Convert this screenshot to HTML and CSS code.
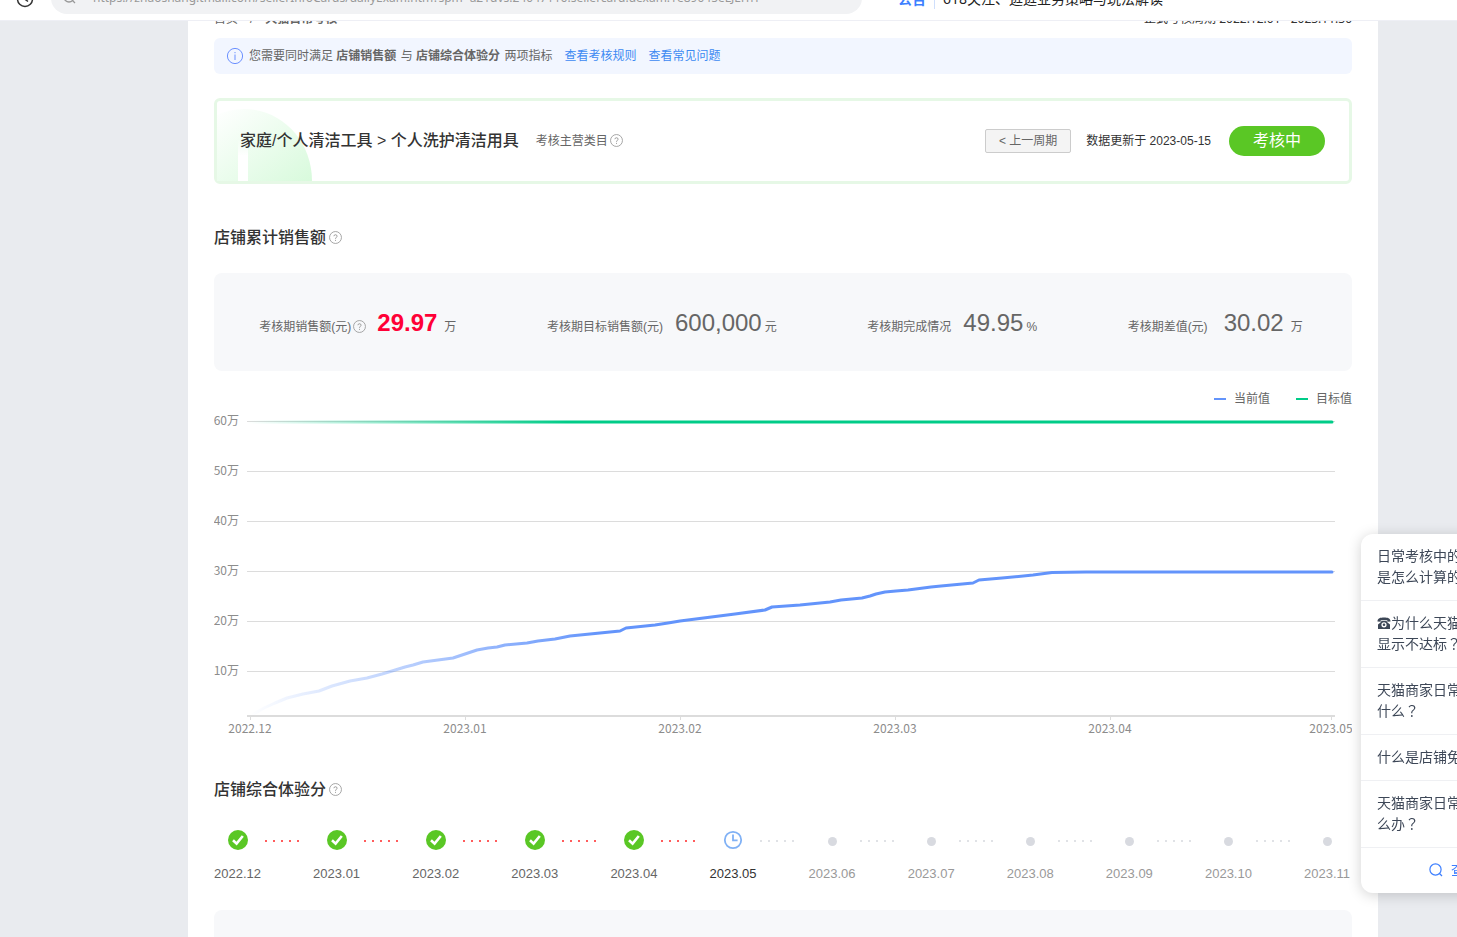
FILE: index.html
```html
<!DOCTYPE html>
<html lang="zh-CN">
<head>
<meta charset="utf-8">
<title>天猫日常考核</title>
<link rel="stylesheet" href="styles.css">
</head>
<body>
<svg class="defs" aria-hidden="true">
  <symbol id="help" viewBox="0 0 12 12">
    <circle cx="6" cy="6" r="5.5" fill="none" stroke="currentColor" stroke-width=".8"/>
    <path d="M4.5 4.8C4.5 3 7.5 3 7.5 4.8C7.5 5.8 6 5.8 6 7.2M6 8.2V9.1" fill="none" stroke="currentColor" stroke-width=".9"/>
  </symbol>
  <symbol id="done" viewBox="0 0 20 20">
    <circle cx="10" cy="10" r="10" fill="#5ac725"/>
    <path d="M5 10.2L8.6 13.6L14.8 6" fill="none" stroke="#fff" stroke-width="2.6"/>
  </symbol>
  <symbol id="clock" viewBox="0 0 20 20">
    <circle cx="10" cy="10" r="8.2" fill="none" stroke="#80b1f5" stroke-width="1.8"/>
    <path d="M10 4.5V10.3H14.6" fill="none" stroke="#80b1f5" stroke-width="1.8"/>
  </symbol>
</svg>

<header class="browser">
  <svg class="history" viewBox="0 0 18 18" aria-hidden="true"><circle cx="9" cy="9" r="7.5"/><path d="M8 4V8.500L12 11.5"/></svg>
  <label class="address">
    <svg viewBox="0 0 14 14" aria-hidden="true"><circle cx="6" cy="6" r="5"/><path d="M9.6 9.6L12 12"/></svg>
    <input type="text" aria-label="地址" value="https://zhaoshang.tmall.com/sellerInfoCards/dailyExam.htm?spm=a21dvs.24047116.sellercard.dexam.1e89045eLJErhY">
  </label>
  <div class="bulletin"><b>公告</b><a href="#">618关注、逛逛业务策略与玩法解读</a></div>
</header>

<main class="page">
  <div class="sheet">
    <div class="crumbs">
      <nav><a href="#">首页</a><span class="slash">/</span><b>天猫日常考核</b></nav>
      <span class="period">正式考核周期 2022.12.01 - 2023.11.30</span>
    </div>

    <div class="notice">
      <svg class="info" viewBox="0 0 18 18" aria-hidden="true"><circle cx="9" cy="9" r="7.6"/><path d="M9 7.5V13M9 5V6.2"/></svg>
      <p>您需要同时满足 <b>店铺销售额</b> 与 <b>店铺综合体验分</b> 两项指标</p>
      <a href="#">查看考核规则</a>
      <a href="#">查看常见问题</a>
    </div>

    <section class="category">
      <svg class="leaf" viewBox="0 0 96 72" aria-hidden="true">
        <defs>
          <linearGradient id="leafFill" x1="0" y1="0" x2="1" y2="1"><stop offset="0" stop-color="#fff"/><stop offset="1" stop-color="#d8fadc"/></linearGradient>
          <linearGradient id="leafBar" x1="0" y1="0" x2="0" y2="1"><stop offset="0" stop-color="#fff" stop-opacity="0"/><stop offset=".4" stop-color="#fff"/></linearGradient>
        </defs>
        <path d="M0 6C8 2 17 0 27 0C65 0 95 32 95 72H0Z" fill="url(#leafFill)"/>
        <path d="M21 30H31V72H21Z" fill="url(#leafBar)"/>
      </svg>
      <h1>家庭/个人清洁工具 &gt; 个人洗护清洁用具</h1>
      <span class="main-category">考核主营类目<svg class="help"><use href="#help"/></svg></span>
      <button class="prev" type="button">&lt; 上一周期</button>
      <span class="updated">数据更新于 2023-05-15</span>
      <span class="status">考核中</span>
    </section>

    <h2>店铺累计销售额<svg class="help"><use href="#help"/></svg></h2>
    <div class="stats">
      <div class="stat"><span>考核期销售额(元)<svg class="help"><use href="#help"/></svg></span><strong class="alert">29.97</strong><span class="unit wide">万</span></div>
      <div class="stat"><span>考核期目标销售额(元)</span><strong>600,000</strong><span class="unit">元</span></div>
      <div class="stat"><span>考核期完成情况</span><strong>49.95</strong><span class="unit">%</span></div>
      <div class="stat"><span>考核期差值(元)</span><strong class="spaced">30.02</strong><span class="unit wide">万</span></div>
    </div>

    <div class="legend"><span class="current">当前值</span><span class="target">目标值</span></div>
    <svg class="chart" viewBox="0 0 1138 330" role="img" aria-label="店铺累计销售额走势">
      <defs>
        <linearGradient id="targetLine" gradientUnits="userSpaceOnUse" x1="33" y1="0" x2="353" y2="0"><stop offset="0" stop-color="#00cc88" stop-opacity="0"/><stop offset="1" stop-color="#00cc88"/></linearGradient>
        <linearGradient id="currentLine" gradientUnits="userSpaceOnUse" x1="36" y1="0" x2="386" y2="0"><stop offset="0" stop-color="#6394fb" stop-opacity="0"/><stop offset="1" stop-color="#6394fb"/></linearGradient>
      </defs>
      <path class="grid" d="M33 11.5H1121M33 61.5H1121M33 111.5H1121M33 161.5H1121M33 211.5H1121M33 261.5H1121"/>
      <path class="axis" d="M33 306H1121"/>
      <path class="grid" d="M36.5 306V310M251.5 306V310M466.5 306V310M681.5 306V310M896.5 306V310M1117.5 306V310"/>
      <path d="M33 12H1118" fill="none" stroke="url(#targetLine)" stroke-width="3" stroke-linecap="round"/>
      <path fill="none" stroke="url(#currentLine)" stroke-width="3" stroke-linejoin="round" stroke-linecap="round" d="M36 306L50 298L61 293L73 288L89 284L105 281L118 276L136 271L153 268L168 264L178 261L191 257L199 255L209 252L239 248L251 244L263 240L274 238L283 237L291 235L313 233L324 231L341 229L356 226L386 223L406 221L412 218L441 215L454 213L466 211L521 204L551 200L558 197L586 195L616 192L627 190L648 188L656 186L662 184L671 182L682 181L694 180L717 177L727 176L759 173L765 170L788 168L819 165L838 162.500L872 162H1118"/>
      <g class="values"><text x="25" y="15">60万</text><text x="25" y="65">50万</text><text x="25" y="115">40万</text><text x="25" y="165">30万</text><text x="25" y="215">20万</text><text x="25" y="265">10万</text></g>
      <g class="months"><text x="36" y="323">2022.12</text><text x="251" y="323">2023.01</text><text x="466" y="323">2023.02</text><text x="681" y="323">2023.03</text><text x="896" y="323">2023.04</text><text x="1117" y="323">2023.05</text></g>
    </svg>

    <h2>店铺综合体验分<svg class="help"><use href="#help"/></svg></h2>
    <ol class="steps">
      <li class="done"><svg><use href="#done"/></svg><time>2022.12</time></li>
      <li class="done"><svg><use href="#done"/></svg><time>2023.01</time></li>
      <li class="done"><svg><use href="#done"/></svg><time>2023.02</time></li>
      <li class="done"><svg><use href="#done"/></svg><time>2023.03</time></li>
      <li class="done"><svg><use href="#done"/></svg><time>2023.04</time></li>
      <li class="now"><svg><use href="#clock"/></svg><time>2023.05</time></li>
      <li><i></i><time>2023.06</time></li>
      <li><i></i><time>2023.07</time></li>
      <li><i></i><time>2023.08</time></li>
      <li><i></i><time>2023.09</time></li>
      <li><i></i><time>2023.10</time></li>
      <li><i></i><time>2023.11</time></li>
    </ol>
    <div class="score"></div>
  </div>
</main>

<aside class="faq">
  <a href="#">日常考核中的<br>是怎么计算的</a>
  <a href="#"><svg class="phone" viewBox="0 0 14 14" aria-hidden="true"><path fill-rule="evenodd" d="M.5 5.500C.5 2 3.500 1.500 7 1.500S13.500 2 13.500 5.500L10.300 5.800V4.300H3.700V5.800ZM4.500 5H9.500L10.500 6.500L13 8.500V13H1V8.500L3.500 6.500ZM7 6.200A2.600 2.600 0 1 0 7 11.400A2.600 2.600 0 1 0 7 6.200ZM7 7.500A1.300 1.300 0 1 1 7 10.100A1.300 1.300 0 1 1 7 7.500Z"/></svg>为什么天猫<br>显示不达标<span class="mark" lang="zh-TW">？</span></a>
  <a href="#">天猫商家日常<br>什么<span class="mark" lang="zh-TW">？</span></a>
  <a href="#">什么是店铺免</a>
  <a href="#">天猫商家日常<br>么办<span class="mark" lang="zh-TW">？</span></a>
  <a class="more" href="#"><svg viewBox="0 0 14 14" aria-hidden="true"><circle cx="6.500" cy="6.500" r="5.600"/><path d="M10.500 10.500L13 13"/></svg>查看</a>
</aside>
</body>
</html>
```
FILE: styles.css
```css
* { box-sizing: border-box; }

body {
  margin: 0;
  height: 100vh;
  display: flex;
  flex-direction: column;
  overflow: hidden;
  background: #e9ebef;
  color: #333;
  font: 12px/18px "Liberation Sans", "Noto Sans CJK SC", sans-serif;
}

a { color: inherit; text-decoration: none; }
h1, h2, p, ol { margin: 0; padding: 0; }
.defs { position: absolute; width: 0; height: 0; }

/* Browser bar, scrolled mostly out of view */
.browser {
  flex: none;
  display: flex;
  align-items: flex-end;
  height: 21px;
  padding-left: 16px;
  overflow: hidden;
  background: #fff;
  border-bottom: 1px solid #eeeff5;
}
.history { flex: none; width: 18px; height: 18px; margin-bottom: 12px; fill: none; stroke: #333; stroke-width: 1.5; }
.address {
  flex: none;
  display: flex;
  align-items: center;
  width: 57%;
  max-width: 811px;
  height: 32px;
  margin: 0 36px 6px 17px;
  padding: 0 12px;
  border-radius: 16px;
  background: #f1f2f4;
}
.address svg { flex: none; width: 14px; height: 14px; margin-right: 16px; fill: none; stroke: #999; stroke-width: 1.3; }
.address input { flex: 1; padding: 0; border: 0; background: none; color: #999; font: 12px/18px "Noto Sans", sans-serif; }
.bulletin { display: flex; margin-bottom: 11px; font: 14px/20px "Noto Sans", "Noto Sans CJK SC", sans-serif; color: #222; white-space: nowrap; }
.bulletin b { margin-right: 8px; padding-right: 8px; border-right: 1px solid #cfdffc; color: #3d7fff; }

.page { flex: 1; min-height: 0; overflow: hidden; padding: 0 79px 0 188px; }
.sheet { min-height: 100%; padding: 0 26px; background: #fff; overflow: hidden; }

.crumbs { display: flex; justify-content: space-between; margin: -11px 0 10px; }
.crumbs nav { color: #666; }
.slash { margin: 0 12px; }
.period { font-family: "Noto Sans", "Noto Sans CJK SC", sans-serif; }

.notice {
  display: flex;
  align-items: center;
  height: 36px;
  padding-left: 12px;
  border-radius: 6px;
  background: #f2f6ff;
  color: #666;
}
.notice b { margin-right: 1px; }
.notice a { margin-left: 12px; color: #3d8af2; }
.info { width: 18px; height: 18px; margin-right: 5px; fill: none; stroke: #6b90ff; }

.help { width: 13px; height: 13px; margin-left: 2px; color: #999; vertical-align: -2px; }

.category {
  position: relative;
  display: flex;
  align-items: center;
  height: 86px;
  margin-top: 24px;
  padding: 0 24px 0 23px;
  border: 3px solid #e6f8e6;
  border-radius: 6px;
}
.leaf { position: absolute; left: 0; bottom: 0; width: 96px; height: 72px; }
.category h1 { position: relative; font-size: 16px; line-height: 24px; font-weight: 500; }
.main-category { margin-left: 17px; color: #666; }
.prev {
  height: 24px;
  margin-left: auto;
  padding: 0 13px;
  border: 1px solid #ccc;
  border-radius: 2px;
  background: #f4f4f4;
  color: #666;
  font: inherit;
}
.updated { margin: 0 18px 0 15px; }
.status { padding: 3px 24px; border-radius: 15px; background: #5ac725; color: #fff; font-size: 16px; line-height: 24px; }

h2 { margin: 42px 0 23px; font-size: 16px; line-height: 24px; font-weight: 500; }
h2 .help { margin-left: 3px; vertical-align: -1px; }

.stats {
  display: flex;
  justify-content: space-around;
  align-items: center;
  height: 98px;
  padding: 2px 4px 0 0;
  border-radius: 8px;
  background: #f7f8fa;
  color: #666;
}
.stat { display: flex; align-items: baseline; }
.stat strong { margin: 0 3px 0 12px; font-size: 24px; line-height: 32px; font-weight: 400; }
.stat .alert { margin-left: 11px; color: #ff0036; font-weight: 700; }
.stat .spaced { margin-left: 16px; }
.stat .wide { margin-left: 4px; }

.legend { display: flex; justify-content: flex-end; gap: 26px; margin: 19px 0 2px; color: #666; }
.legend span { display: flex; align-items: center; gap: 8px; }
.legend span::before { content: ""; width: 12px; height: 2px; background: #6394fb; }
.legend .target::before { background: #00cc88; }

.chart { display: block; width: 100%; height: auto; font: 12px "Noto Sans CJK SC", sans-serif; }
.chart text { fill: #8c8c8c; }
.grid { fill: none; stroke: #dcdcdc; }
.axis { stroke: #dcdcdc; stroke-width: 2; }
.values { text-anchor: end; }
.months { text-anchor: middle; }

.chart + h2 { margin: 38px 0 26px; }

.steps { display: flex; padding-right: 2px; list-style: none; color: #666; font-size: 13px; }
.steps li { flex: 1; display: grid; grid-template-columns: auto 1fr; grid-template-rows: 24px 18px; row-gap: 13px; align-items: center; justify-items: center; }
.steps li:last-child { flex: none; }
.steps li:not(:last-child)::after {
  content: "";
  grid-area: 1 / 2;
  justify-self: start;
  width: 36px;
  height: 2px;
  margin: 2px 0 0 4px;
  background: repeating-linear-gradient(90deg, #e0e2e6 0 2px, transparent 2px 8px);
}
.steps .done:not(:last-child)::after { background: repeating-linear-gradient(90deg, #ff5c5c 0 2px, transparent 2px 8px); }
.steps svg { width: 20px; height: 20px; }
.steps i { width: 9px; height: 9px; margin-top: 3px; border-radius: 50%; background: #d8dae0; }
.steps time { grid-area: 2 / 1; }
.steps .now { color: #333; }
.steps .now ~ li { color: #999; }

.score { height: 120px; margin-top: 27px; border-radius: 8px; background: #f7f8fa; }

/* Floating question list, docked past the right edge */
.faq {
  position: fixed;
  right: -40px;
  bottom: 44px;
  width: 136px;
  border-radius: 12px;
  background: #fff;
  box-shadow: 0 2px 14px rgba(0, 0, 0, .18);
  color: #3d4757;
  font-size: 14px;
  line-height: 21px;
  white-space: nowrap;
}
.faq a { display: block; padding: 12px 16px; border-bottom: 1px solid #eff0f3; }
.faq .more { padding-left: 68px; border: 0; color: #3d7fff; }
.faq svg { width: 14px; height: 14px; vertical-align: -2px; fill: currentColor; }
.faq .more svg { margin-right: 8px; fill: none; stroke: currentColor; stroke-width: 1.2; }
.mark { font-family: "Noto Sans CJK TC", sans-serif; line-height: 1; }
```
